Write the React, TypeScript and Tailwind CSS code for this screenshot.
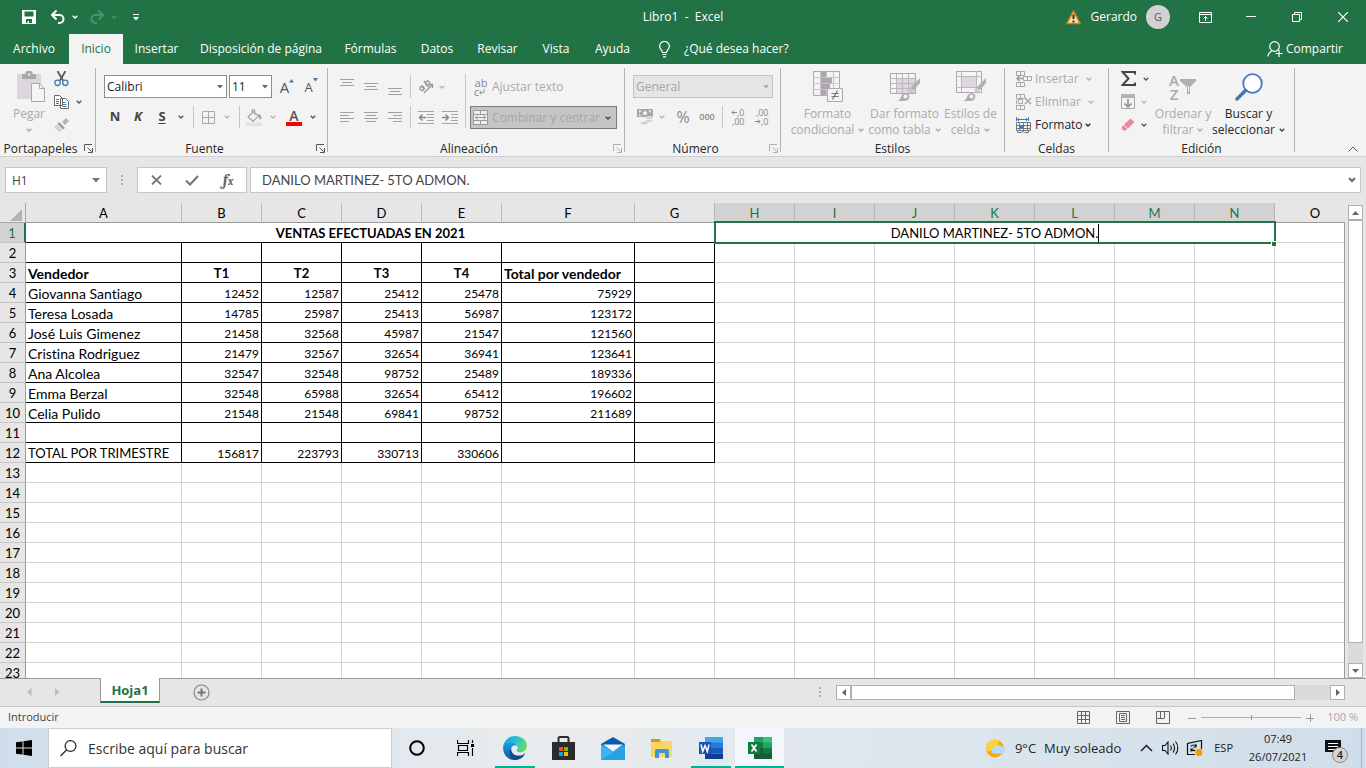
import type { ReactNode } from "react";

const cols = ["A", "B", "C", "D", "E", "F", "G", "H", "I", "J", "K", "L", "M", "N", "O"];
const selectedCols = "HIJKLMN";

const colWidths = [
  "w-[26px]", "w-[156px]", "w-[80px]", "w-[80px]", "w-[80px]", "w-[80px]", "w-[133px]", "w-[80px]",
  "w-[80px]", "w-[80px]", "w-[80px]", "w-[80px]", "w-[80px]", "w-[80px]", "w-[80px]", "w-auto",
];

const sheet: Record<number, (string | number)[]> = {
  3: ["Vendedor", "T1", "T2", "T3", "T4", "Total por vendedor"],
  4: ["Giovanna Santiago", 12452, 12587, 25412, 25478, 75929],
  5: ["Teresa Losada", 14785, 25987, 25413, 56987, 123172],
  6: ["José Luis Gimenez", 21458, 32568, 45987, 21547, 121560],
  7: ["Cristina Rodriguez", 21479, 32567, 32654, 36941, 123641],
  8: ["Ana Alcolea", 32547, 32548, 98752, 25489, 189336],
  9: ["Emma Berzal", 32548, 65988, 32654, 65412, 196602],
  10: ["Celia Pulido", 21548, 21548, 69841, 98752, 211689],
  12: ["TOTAL POR TRIMESTRE", 156817, 223793, 330713, 330606],
};

const tabs = [
  { name: "Archivo", width: "w-[68px]" },
  { name: "Inicio", width: "w-[54px]", active: true },
  { name: "Insertar", width: "w-[67px]" },
  { name: "Disposición de página", width: "w-[142px]" },
  { name: "Fórmulas", width: "w-[77px]" },
  { name: "Datos", width: "w-[56px]" },
  { name: "Revisar", width: "w-[65px]" },
  { name: "Vista", width: "w-[52px]" },
  { name: "Ayuda", width: "w-[61px]" },
];

const entry = "DANILO MARTINEZ- 5TO ADMON.";

function Icon({ w, h, children, className = "" }: { w: number; h: number; children: ReactNode; className?: string }) {
  return (
    <svg width={w} height={h} viewBox={`0 0 ${w} ${h}`} fill="none" aria-hidden="true" className={`shrink-0 ${className}`}>
      {children}
    </svg>
  );
}

function Chevron({ className = "text-[#555]" }: { className?: string }) {
  return (
    <Icon w={6} h={4} className={className}>
      <path d="M.7.7 3 3 5.3.7" stroke="currentColor" strokeWidth="1.3" />
    </Icon>
  );
}

function Caret({ className = "text-[#666]" }: { className?: string }) {
  return (
    <Icon w={6} h={4} className={className}>
      <path d="M0 0h6L3 3.5z" fill="currentColor" />
    </Icon>
  );
}

function Btn({ label, className = "", children, disabled }: { label: string; className?: string; children: ReactNode; disabled?: boolean }) {
  return (
    <button type="button" aria-label={label} disabled={disabled} className={`flex shrink-0 items-center justify-center ${className}`}>
      {children}
    </button>
  );
}

function Group({ label, width, launcher, children }: { label: string; width: string; launcher?: "on" | "off"; children: ReactNode }) {
  return (
    <>
      <section aria-label={label} className={`flex shrink-0 flex-col pt-[3px] ${width}`}>
        <div className="flex flex-1">{children}</div>
        <div className="flex h-4 items-center">
          <span className="flex-1 pt-[2px] text-center leading-4">{label}</span>
          {launcher && (
            <Btn label={`Opciones de ${label}`} disabled={launcher === "off"} className={`w-[14px] ${launcher === "on" ? "text-[#555]" : "text-[#b0b0b0]"}`}>
              <Icon w={9} h={9}>
                <path d="M.5 7V.5H8M3.500 3.500l4 4M8.500 4v4.500H4" stroke="currentColor" />
              </Icon>
            </Btn>
          )}
        </div>
      </section>
      <div className="my-1 w-px shrink-0 bg-[#b3b3b3]" />
    </>
  );
}

function Big({ icon, top, bottom, width, disabled = true }: { icon: ReactNode; top: string; bottom?: string; width: string; disabled?: boolean }) {
  return (
    <button type="button" disabled={disabled} className={`flex shrink-0 flex-col items-center whitespace-nowrap leading-4 ${width} ${disabled ? "text-[#aaa]" : "text-[#262626]"}`}>
      <span className="flex h-[39px] items-center justify-center">{icon}</span>
      <span>{top}</span>
      <span className="flex h-4 items-center gap-1">
        {bottom}
        <Chevron className={disabled ? "text-[#aaa]" : "text-[#444]"} />
      </span>
    </button>
  );
}

function Sep({ className = "" }: { className?: string }) {
  return <div className={`w-px shrink-0 self-stretch bg-[#c6c6c6] ${className}`} />;
}

function Lines({ rows }: { rows: [number, number, number][] }) {
  return (
    <Icon w={14} h={22}>
      {rows.map(([x, y, w]) => (
        <path key={y} d={`M${x} ${y}.5h${w}`} stroke="#a0a0a0" />
      ))}
    </Icon>
  );
}

function BrushTip() {
  return (
    <>
      <path d="m30 7-9.500 9.500 3 3L30 12z" fill="#b0aeb0" />
      <path d="m20 17 3.500 3.500-2 2-3.500-3.500z" fill="#c8c5c8" />
      <path d="M7 30c4-1 3-3 5-6 2-2.500 5.500-2.500 7 0 1.300 3-1 6-5 6z" fill="#aeacae" />
      <circle cx="15.500" cy="25.500" r="2" fill="#f3f3f3" />
    </>
  );
}

function TitleBar() {
  return (
    <header className="flex h-[34px] shrink-0 items-center">
      <div className="flex flex-1 items-center">
        <Btn label="Guardar" className="ml-[22px] w-[14px]">
          <Icon w={14} h={14}>
            <path d="M0 0h14v14H0zM2.500 1.500v5h9v-5zM4 9v4h1.500v-2H7v2h3V9z" fill="#fff" fillRule="evenodd" />
          </Icon>
        </Btn>
        <Btn label="Deshacer" className="ml-[15px] w-[14px]">
          <Icon w={14} h={14}>
            <path d="M1 5h7.500a4 4 0 0 1 0 8H7" stroke="#fff" strokeWidth="2" />
            <path d="M5.500.5 1 5l4.500 4.500" stroke="#fff" strokeWidth="2" />
          </Icon>
        </Btn>
        <Btn label="Más deshacer" className="ml-[7px] w-[6px]"><Chevron className="text-white" /></Btn>
        <Btn label="Rehacer" disabled className="ml-3 w-[14px]">
          <Icon w={14} h={14}>
            <path d="M13 5H5.500a4 4 0 0 0 0 8H7M8.500.5 13 5 8.500 9.500" stroke="#4f9170" strokeWidth="2" />
          </Icon>
        </Btn>
        <Btn label="Más rehacer" disabled className="ml-[7px] w-[6px]"><Chevron className="text-[#4f9170]" /></Btn>
        <Btn label="Personalizar barra" className="ml-4 w-[6px]">
          <Icon w={6} h={7}>
            <path d="M0 .5h6" stroke="#fff" />
            <path d="M0 3h6L3 6.500z" fill="#fff" />
          </Icon>
        </Btn>
      </div>
      <h1 className="whitespace-pre text-xs">Libro1  -  Excel</h1>
      <div className="flex flex-1 items-center justify-end">
        <Icon w={15} h={15} className="mr-[10px]">
          <path d="M7.500 1 14 13.500H1z" fill="#fbe3a4" stroke="#e2791b" strokeWidth="1.500" />
          <path d="M7.500 4.500v4.500M7.500 10.500v2" stroke="#3d2a10" strokeWidth="2" />
        </Icon>
        <span>Gerardo</span>
        <button type="button" aria-label="Cuenta" className="ml-[9px] mr-3 size-6 rounded-full bg-[#d2d2d2] text-[11px] text-[#555]">G</button>
        <Btn label="Opciones de la cinta" className="w-[46px]">
          <Icon w={13} h={11}>
            <path d="M.5.5h12v10H.5zM.5 2.500h12M6.500 9V4.500M4.500 6.500l2-2 2 2" stroke="#fff" />
          </Icon>
        </Btn>
        <Btn label="Minimizar" className="w-[46px]"><Icon w={10} h={2}><path d="M0 .5h10" stroke="#fff" /></Icon></Btn>
        <Btn label="Restaurar" className="w-[46px]">
          <Icon w={10} h={10}><path d="M.5 2.500h7v7h-7zM2.500 2V.5h7v7H8" stroke="#fff" /></Icon>
        </Btn>
        <Btn label="Cerrar" className="w-[46px]"><Icon w={10} h={10}><path d="m0 0 10 10M10 0 0 10" stroke="#fff" strokeWidth="1.200" /></Icon></Btn>
      </div>
    </header>
  );
}

function TabBar() {
  return (
    <nav className="flex h-[30px] shrink-0 items-stretch whitespace-nowrap">
      {tabs.map((t) => (
        <button key={t.name} type="button" className={`flex items-center justify-center first:mr-px ${t.width} ${t.active ? "bg-[#f3f3f3] text-[#217346]" : ""}`}>
          {t.name}
        </button>
      ))}
      <button type="button" className="ml-4 flex items-center gap-[14px]">
        <Icon w={11} h={17}>
          <path d="M3.500 11.500C3.500 9 .6 8.500.6 5.300a4.900 4.900 0 0 1 9.800 0c0 3.200-2.900 3.700-2.900 6.200zM3.500 13.500h4M4 15.800h3" stroke="#fff" strokeWidth="1.200" />
        </Icon>
        ¿Qué desea hacer?
      </button>
      <button type="button" className="ml-auto mr-[23px] flex items-center gap-[3px]">
        <Icon w={16} h={16}>
          <circle cx="7.500" cy="5.500" r="4.800" stroke="#fff" strokeWidth="1.200" />
          <path d="M1 15.500c0-3 2-4.500 4-5.500M12 9v7M8.500 12.500h7" stroke="#fff" strokeWidth="1.200" />
        </Icon>
        Compartir
      </button>
    </nav>
  );
}

function Clipboard() {
  return (
    <Group label="Portapapeles" width="w-[95px]" launcher="on">
      <Big
        width="ml-3 w-[34px]"
        top="Pegar"
        icon={
          <Icon w={28} h={31} className="ml-1">
            <path d="M0 3h24v25H0z" fill="#dcd6dc" />
            <path d="M5 3h3.500V1.500A1.500 1.500 0 0 1 10 0h4a1.500 1.500 0 0 1 1.500 1.500V3H19v5H5z" fill="#aba8ab" />
            <path d="M11 2.500h2v2h-2z" fill="#f3f3f3" />
            <path d="M14.500 12.500h8l5 5v13h-13z" fill="#f6f3f7" stroke="#aaa6aa" />
            <path d="M22.500 12.500v5h5" stroke="#aaa6aa" />
          </Icon>
        }
      />
      <div className="ml-[6px] flex flex-col">
        <Btn label="Cortar" className="h-[23px] w-[18px]">
          <Icon w={15} h={16}>
            <path d="m3.500 0 5.500 9.500M11.500 0 6 9.500" stroke="#5a5a5a" strokeWidth="1.800" />
            <circle cx="3.500" cy="11.800" r="2.700" stroke="#4379b5" strokeWidth="1.300" />
            <circle cx="11.300" cy="11.800" r="2.700" stroke="#4379b5" strokeWidth="1.300" />
          </Icon>
        </Btn>
        <div className="flex">
          <Btn label="Copiar" className="h-[23px] w-[18px]">
            <Icon w={15} h={14}>
              <path d="M.5.5h5l3 3v7h-8zM6.500 3.500h5l3 3v7h-8z" fill="#fff" stroke="#666" />
              <path d="M2 4.500h3M2 6.500h3M2 8.500h3M8.500 7.500h3M8.500 9.500h4M8.500 11.500h4" stroke="#4379b5" />
            </Icon>
          </Btn>
          <Btn label="Opciones de copiar" className="w-[18px]"><Chevron /></Btn>
        </div>
        <Btn label="Copiar formato" disabled className="h-[23px] w-[18px]">
          <Icon w={15} h={14}>
            <path d="m15 3-3-3-4 4 3 3z" fill="#b5b3b5" />
            <path d="m5 4 6 6-2 1.500-5.500-5.500z" fill="#9c9a9c" />
            <path d="M3 6.500 8 12l-3 2-5-5z" fill="#d5d0d5" />
          </Icon>
        </Btn>
      </div>
    </Group>
  );
}

function Font() {
  return (
    <Group label="Fuente" width="w-[231px]" launcher="on">
      <div className="flex flex-col pl-2 pt-2">
        <div className="flex h-[23px]">
          <div className="relative mr-[2px] w-[123px]">
            <select aria-label="Fuente" className="h-full w-full appearance-none border border-[#8e8e8e] bg-white px-[2px] text-[#222]"><option>Calibri</option></select>
            <Caret className="absolute right-1 top-[10px] text-[#666]" />
          </div>
          <div className="relative w-[43px]">
            <select aria-label="Tamaño" className="h-full w-full appearance-none border border-[#8e8e8e] bg-white px-[2px] text-[#222]"><option>11</option></select>
            <Caret className="absolute right-1 top-[10px] text-[#666]" />
          </div>
          <Btn label="Aumentar" className="ml-[3px] w-6 text-[15px] text-[#555]">
            A<Icon w={5} h={4} className="mb-3"><path d="M0 3.500 2.500 0 5 3.500z" fill="#4379b5" /></Icon>
          </Btn>
          <Btn label="Disminuir" className="w-6 pt-[3px] text-[13px] text-[#555]">
            A<Icon w={5} h={4} className="mb-4"><path d="M0 0h5L2.500 3.500z" fill="#4379b5" /></Icon>
          </Btn>
        </div>
        <div className="mt-2 flex h-[22px] items-center">
          <Btn label="Negrita" className="w-[22px] text-[13px] font-bold text-[#444]">N</Btn>
          <Btn label="Cursiva" className="w-6 text-[13px] font-bold italic text-[#444]">K</Btn>
          <Btn label="Subrayado" className="w-6 text-[13px] font-bold text-[#444] underline underline-offset-2">S</Btn>
          <Btn label="Más subrayados" className="w-[14px]"><Chevron /></Btn>
          <Sep className="ml-[5px]" />
          <Btn label="Bordes" disabled className="w-7">
            <Icon w={13} h={13}><path d="M.5.5h12v12H.5zM6.500 0v13M0 6.500h13" stroke="#aaa" /></Icon>
          </Btn>
          <Btn label="Más bordes" disabled className="w-[10px]"><Chevron className="text-[#b5b5b5]" /></Btn>
          <Sep className="ml-[7px]" />
          <Btn label="Relleno" disabled className="w-7">
            <Icon w={16} h={17}>
              <path d="M7.500 2.500 2 8l5 4.500L12.500 7zM6 5V1.500a1.300 1.300 0 0 1 2.600 0V6" stroke="#a5a3a5" strokeWidth="1.200" />
              <path d="M12 5c3.500.5 3.500 3 3 6-1-1-2-2-3-4z" fill="#a5a3a5" />
              <path d="M0 13.500h16V17H0z" fill="#e4dfe4" />
            </Icon>
          </Btn>
          <Btn label="Más rellenos" disabled className="w-[10px]"><Chevron className="text-[#b5b5b5]" /></Btn>
          <Btn label="Color de fuente" className="w-8 flex-col text-[14px] leading-[13px] text-[#555]">
            <span className="h-[13px] font-semibold">A</span>
            <span className="h-1 w-4 bg-[#f00]" />
          </Btn>
          <Btn label="Más colores" className="w-[6px]"><Chevron /></Btn>
        </div>
      </div>
    </Group>
  );
}

function Alignment() {
  return (
    <Group label="Alineación" width="w-[296px]" launcher="off">
      <div className="flex flex-col gap-2 pl-[7px] pt-2">
        <div className="flex h-[23px] items-center">
          <Btn label="Alinear arriba" disabled className="w-6"><Lines rows={[[0, 3, 14], [2, 6, 10], [0, 9, 14]]} /></Btn>
          <Btn label="Alinear en medio" disabled className="w-6"><Lines rows={[[0, 7, 14], [2, 10, 10], [0, 13, 14]]} /></Btn>
          <Btn label="Alinear abajo" disabled className="w-6"><Lines rows={[[0, 12, 14], [2, 15, 10], [0, 18, 14]]} /></Btn>
          <Sep className="mx-[3px]" />
          <Btn label="Orientación" disabled className="w-6">
            <Icon w={16} h={15}>
              <path d="M6 14 14 6M11 5.500h3.500V9" stroke="#999" strokeWidth="1.300" />
              <circle cx="4" cy="9.500" r="2" stroke="#999" strokeWidth="1.300" />
              <path d="m3.500 6.500 3 4M6 2l4.500 6" stroke="#999" strokeWidth="1.400" />
              <circle cx="9.500" cy="4" r="2" stroke="#999" strokeWidth="1.300" />
            </Icon>
          </Btn>
          <Btn label="Más orientación" disabled className="w-2"><Chevron className="text-[#b5b5b5]" /></Btn>
        </div>
        <div className="flex h-[22px] items-center">
          <Btn label="Izquierda" disabled className="w-6"><Lines rows={[[0, 6, 14], [0, 9, 9], [0, 12, 14], [0, 15, 9]]} /></Btn>
          <Btn label="Centrar" disabled className="w-6"><Lines rows={[[0, 6, 14], [2, 9, 10], [0, 12, 14], [2, 15, 10]]} /></Btn>
          <Btn label="Derecha" disabled className="w-6"><Lines rows={[[0, 6, 14], [5, 9, 9], [0, 12, 14], [5, 15, 9]]} /></Btn>
          <Sep className="mx-[3px]" />
          <Btn label="Disminuir sangría" disabled className="w-6">
            <Icon w={16} h={13}><path d="M0 .5h16M9 3.500h7M9 6.500h7M9 9.500h7M0 12.500h16" stroke="#a5a5a5" /><path d="M8 6.500H2M4.500 3.500l-3 3 3 3" stroke="#8a8a8a" strokeWidth="1.500" /></Icon>
          </Btn>
          <Btn label="Aumentar sangría" disabled className="w-6">
            <Icon w={16} h={13}><path d="M0 .5h16M9 3.500h7M9 6.500h7M9 9.500h7M0 12.500h16" stroke="#a5a5a5" /><path d="M0 6.500h6M3.500 3.500l3 3-3 3" stroke="#8a8a8a" strokeWidth="1.500" /></Icon>
          </Btn>
        </div>
      </div>
      <Sep className="mb-3 ml-[3px] mr-1 mt-[7px]" />
      <div className="flex flex-col gap-2 pt-2">
        <button type="button" disabled className="flex h-[23px] items-center gap-1 px-1 text-[#aaa]">
          <span className="flex w-[14px] flex-col text-[11px] leading-[9px] text-[#888]">
            <span>ab</span>
            <span className="flex items-center">c<Icon w={6} h={7}><path d="M5 1v3.500H1M2.500 2.500l-2 2 2 2" stroke="#999" /></Icon></span>
          </span>
          Ajustar texto
        </button>
        <div className="flex h-[23px] w-[147px] items-center border border-[#7c7c7c] bg-[#c5c5c5] text-[#a5a5a5]">
          <button type="button" disabled className="flex flex-1 items-center gap-1 whitespace-nowrap pl-[2px]">
            <Icon w={15} h={15}>
              <path d="M.5.5h14v14H.5z" fill="#f1edf2" stroke="#9a989a" />
              <path d="M.5 4.500h14M.5 10.500h14M7.500 0v4M7.500 11v4M2.500 7.500h10M4.500 5.500l-2 2 2 2M10.500 5.500l2 2-2 2" stroke="#9a989a" />
            </Icon>
            Combinar y centrar
          </button>
          <Btn label="Más combinar" className="w-4"><Chevron className="text-[#444]" /></Btn>
        </div>
      </div>
    </Group>
  );
}

function NumberGroup() {
  return (
    <Group label="Número" width="w-[155px]" launcher="off">
      <div className="flex flex-col pl-2 pt-2">
        <div className="relative h-[23px] w-[140px]">
          <select aria-label="Formato de número" disabled className="h-full w-full appearance-none border border-[#c3c3c3] bg-[#e5e5e5] px-[2px] text-[#a5a5a5] opacity-100"><option>General</option></select>
          <Caret className="absolute right-1 top-[10px] text-[#aaa]" />
        </div>
        <div className="mt-2 flex h-[22px] items-center text-[#888]">
          <Btn label="Moneda" disabled className="w-6">
            <Icon w={16} h={16}>
              <path d="M0 0h16v8H0z" fill="#a8a6a8" />
              <path d="M2 1.500h3L2 4zM11 1.500h3V4zM2 5v2h3z" fill="#f3f3f3" />
              <circle cx="8" cy="4" r="2" fill="#f3f3f3" />
              <ellipse cx="12" cy="9" rx="3.800" ry="1.600" fill="#d6d0d6" stroke="#f3f3f3" strokeWidth=".6" />
              <ellipse cx="12" cy="12" rx="3.800" ry="1.600" fill="#d6d0d6" stroke="#f3f3f3" strokeWidth=".6" />
              <ellipse cx="7" cy="14" rx="3.500" ry="1.500" fill="#d6d0d6" />
            </Icon>
          </Btn>
          <Btn label="Más moneda" disabled className="w-[10px]"><Chevron className="text-[#b5b5b5]" /></Btn>
          <Btn label="Porcentaje" disabled className="w-8 text-base">%</Btn>
          <Btn label="Miles" disabled className="w-4 text-[9px] font-semibold">000</Btn>
          <Sep className="ml-[7px] mr-[2px]" />
          <Btn label="Aumentar decimales" disabled className="w-6 text-[9px] leading-[9px]">
            <span className="flex w-[15px] flex-col items-end">
              <span className="flex items-center"><Icon w={6} h={5}><path d="M6 2.500H1M3 .5l-2 2 2 2" stroke="#888" /></Icon>,0</span>
              <span>,00</span>
            </span>
          </Btn>
          <Btn label="Disminuir decimales" disabled className="w-6 text-[9px] leading-[9px]">
            <span className="flex w-[15px] flex-col items-end">
              <span>,00</span>
              <span className="flex items-center"><Icon w={6} h={5}><path d="M0 2.500h5M3 .5l2 2-2 2" stroke="#888" /></Icon>,0</span>
            </span>
          </Btn>
        </div>
      </div>
    </Group>
  );
}

function Styles() {
  return (
    <Group label="Estilos" width="w-[223px]">
      <Big
        width="ml-[9px] w-[75px]"
        top="Formato"
        bottom="condicional"
        icon={
          <Icon w={30} h={31}>
            <path d="M.5.5h26v24H.5z" fill="#f6f2f7" stroke="#aaa8aa" />
            <path d="M0 6.500h27M0 12.500h27M0 18.500h27M7.500 0v25M13.500 0v25M20.500 0v25" stroke="#c9c6c9" />
            <path d="M8 0h5v6H8zM8 7h11v5H8zM8 13h9v5H8zM8 19h5v6H8z" fill="#aaa8aa" />
            <path d="M14.500 17.500h15v13h-15z" fill="#f6f2f7" stroke="#aaa8aa" />
            <path d="M18.500 22.500h7M18.500 25.500h7M24.500 19.500l-5 9" stroke="#777" strokeWidth="1.200" />
          </Icon>
        }
      />
      <Big
        width="w-[79px]"
        top="Dar formato"
        bottom="como tabla"
        icon={
          <Icon w={30} h={31}>
            <path d="M.5 2.500h25v20H.5z" fill="#f6f2f7" stroke="#aaa8aa" />
            <path d="M7 8h18v14H7z" fill="#dcd7dc" />
            <path d="M0 7.500h25M0 12.500h25M0 17.500h25M6.500 3v19M12.500 3v19M18.500 3v19" stroke="#bbb8bb" />
            <BrushTip />
          </Icon>
        }
      />
      <Big
        width="w-[53px]"
        top="Estilos de"
        bottom="celda"
        icon={
          <Icon w={30} h={31}>
            <path d="M.5.5h25v21H.5z" fill="#f6f2f7" stroke="#aaa8aa" />
            <path d="M6 6h14v11H6z" fill="#dcd7dc" />
            <path d="M0 5.500h26M0 16.500h26M5.500 0v22M20.500 0v22" stroke="#bbb8bb" />
            <BrushTip />
          </Icon>
        }
      />
    </Group>
  );
}

function Cells() {
  return (
    <Group label="Celdas" width="w-[103px]">
      <div className="flex flex-col pl-[11px]">
        <button type="button" disabled className="flex h-[23px] items-center text-[#aaa]">
          <Icon w={16} h={16} className="mr-[3px]">
            <path d="M.5.5h8v4h-8zM4.500.5v4M.5 11.500h8v4h-8zM4.500 11.500v4M7.500 5.500h8v4h-8zM11.500 5.500v4" stroke="#aaa6aa" />
            <path d="M7 7.500H1M3.500 5l-2.500 2.500L3.500 10" stroke="#999" strokeWidth="1.300" />
          </Icon>
          Insertar
          <Chevron className="ml-[7px] text-[#b5b5b5]" />
        </button>
        <button type="button" disabled className="flex h-[23px] items-center text-[#aaa]">
          <Icon w={16} h={16} className="mr-[3px]">
            <path d="M.5.5h8v4h-8zM4.500.5v4M.5 11.500h8v4h-8zM4.500 11.500v4M.5 5.500v5M2.500 5.500h4v4h-4z" stroke="#aaa6aa" />
            <path d="m9 4 6 6M15 4l-6 6" stroke="#aaa6aa" strokeWidth="1.500" />
          </Icon>
          Eliminar
          <Chevron className="ml-[7px] text-[#b5b5b5]" />
        </button>
        <button type="button" className="flex h-[23px] items-center text-[#262626]">
          <Icon w={15} h={16} className="mr-1">
            <path d="M.5 0v4M12.500 0v4M1 2.500h11M3 1 1.500 2.500 3 4M10 1l1.500 1.500L10 4" stroke="#4379b5" />
            <path d="M.5 5.500h14v8H.5zM.5 8.500h14M.5 11.500h14M3.500 5v9M7.500 5v9M11.500 5v9M1.500 14v1.500h4l1.500-1 1.500 1h4V14" stroke="#777" />
            <path d="M4 8h4v4H4z" fill="#4379b5" />
          </Icon>
          Formato
          <Chevron className="ml-[2px]" />
        </button>
      </div>
    </Group>
  );
}

function Editing() {
  return (
    <Group label="Edición" width="w-[185px]">
      <div className="flex flex-col pl-[7px]">
        <div className="flex h-[23px]">
          <Btn label="Autosuma" className="w-6"><Icon w={15} h={15}><path d="M14 3.500V1H1.500l6 6.500-6 6.500H14v-2.500" stroke="#444" strokeWidth="2" /></Icon></Btn>
          <Btn label="Más autosuma" className="w-3"><Chevron /></Btn>
        </div>
        <div className="flex h-[23px]">
          <Btn label="Rellenar" disabled className="w-6">
            <Icon w={14} h={15}><path d="M.5.5h13v14H.5z" fill="#f6f2f7" stroke="#aaa8aa" /><path d="M0 0h14v4H0z" fill="#b5b2b5" /><path d="M7 5v8M3.500 9.500 7 13l3.500-3.500" stroke="#999" strokeWidth="1.800" /></Icon>
          </Btn>
          <Btn label="Más rellenar" disabled className="w-2"><Chevron className="text-[#b5b5b5]" /></Btn>
        </div>
        <div className="flex h-[23px]">
          <Btn label="Borrar" className="w-6">
            <Icon w={14} h={13}><path d="m9.500.5 4 3.500-6.500 6.500-4-3.800z" fill="#e8869c" /><path d="m2.300 7.300 4 3.800-1.800 1.400H2.500L.8 11V9z" fill="#e8869c" /></Icon>
          </Btn>
          <Btn label="Más borrar" className="w-2"><Chevron /></Btn>
        </div>
      </div>
      <Big
        width="w-[62px]"
        top="Ordenar y"
        bottom="filtrar"
        icon={
          <span className="flex items-center text-[#aaa]">
            <span className="flex flex-col text-[15px] font-semibold leading-[14px]"><span>A</span><span>Z</span></span>
            <Icon w={18} h={17}><path d="M1 1h16v2l-6 6v7H8V9L1 3z" fill="#b0aeb0" /><path d="M9.500 8v6" stroke="#f3f3f3" /></Icon>
          </span>
        }
      />
      <Big
        width="w-[69px]"
        top="Buscar y"
        bottom="seleccionar"
        disabled={false}
        icon={
          <Icon w={28} h={28}>
            <circle cx="17.500" cy="10.500" r="9.300" fill="#fff" stroke="#4379b5" strokeWidth="1.800" />
            <path d="M10.500 17.500 2 26" stroke="#4379b5" strokeWidth="3.500" strokeLinecap="round" />
          </Icon>
        }
      />
    </Group>
  );
}

function FormulaBar() {
  return (
    <div className="flex h-[46px] shrink-0 items-start pl-[5px] pr-[5px] pt-[10px] text-[#444]">
      <div className="flex h-[26px] w-[102px] items-center border border-[#c6c6c6] bg-white">
        <input aria-label="Cuadro de nombres" defaultValue="H1" className="w-0 flex-1 pl-[6px] pt-px outline-none" />
        <Btn label="Nombres" className="w-5"><Icon w={8} h={5}><path d="M0 0h8L4 4.500z" fill="#777" /></Icon></Btn>
      </div>
      <Icon w={30} h={26}><path d="M14 8h2v2h-2zM14 12h2v2h-2zM14 16h2v2h-2z" fill="#b0b0b0" /></Icon>
      <div className="mr-[3px] flex h-[26px] w-[110px] border border-[#c6c6c6] bg-white">
        <Btn label="Cancelar" className="w-9"><Icon w={11} h={10}><path d="m1 .5 9 9M10 .5l-9 9" stroke="#777" strokeWidth="1.800" /></Icon></Btn>
        <Btn label="Introducir" className="w-9"><Icon w={14} h={11}><path d="m1 5.500 4 4L13 1" stroke="#777" strokeWidth="2.200" /></Icon></Btn>
        <Btn label="Insertar función" className="w-9 font-serif text-base font-bold italic text-[#666]">
          <span>f</span><span className="pt-1 text-[11px]">x</span>
        </Btn>
      </div>
      <div className="flex h-[26px] flex-1 items-center border border-[#c6c6c6] bg-white">
        <input aria-label="Barra de fórmulas" defaultValue={entry} className="flex-1 pl-[11px] pt-[2px] font-[Lato,sans-serif] text-[13px] outline-none" />
        <Btn label="Expandir" className="w-4"><Icon w={8} h={6}><path d="M1 1l3 3 3-3" stroke="#666" strokeWidth="2" /></Icon></Btn>
      </div>
    </div>
  );
}

function cellClass(row: number, col: number, value?: string | number) {
  const inTable = row <= 12 && col < 7;
  const align = typeof value === "number" ? "text-right" : row === 3 && col > 0 && col < 5 ? "text-center" : "text-left";
  const size = typeof value === "number" ? "text-[12px]" : /[a-z]/.test(value ?? "") ? "text-[14px]" : "text-[13px]";
  return `h-5 overflow-hidden border-b border-r px-[2px] pb-0 pt-[2px] whitespace-nowrap leading-[17px] ${inTable ? "border-black" : "border-[#d4d4d4]"} ${align} ${size} ${row === 3 ? "font-bold" : ""}`;
}

function Grid() {
  return (
    <div className="flex min-h-0 flex-1 gap-[3px] pr-[3px]">
      <div className="relative min-w-0 flex-1 overflow-hidden">
        <table className="w-full table-fixed border-separate border-spacing-0 bg-white font-[Lato,sans-serif] text-[13px] leading-[17px] text-black [font-variant-ligatures:none]">
          <colgroup>
            {colWidths.map((w, i) => <col key={i} className={w} />)}
          </colgroup>
          <thead>
            <tr className="bg-[#e6e6e6]">
              <th className="h-5 border-b border-r border-[#a6a6a6] p-0" aria-label="Seleccionar todo">
                <Icon w={12} h={12} className="ml-auto mr-[3px] mt-1"><path d="M12 0v12H0z" fill="#b3b3b3" /></Icon>
              </th>
              {cols.map((c) => {
                const on = selectedCols.includes(c);
                return (
                  <th key={c} scope="col" className={`h-5 border-b border-b-[#9b9b9b] p-0 pt-[2px] font-normal ${c === "O" ? "pl-[10px]" : "border-r border-r-[#b8b8b8]"} ${on ? "bg-[#d2d2d2] text-[#217346]" : ""}`}>
                    {c}
                  </th>
                );
              })}
            </tr>
          </thead>
          <tbody>
            {Array.from({ length: 23 }, (_, i) => i + 1).map((row) => (
              <tr key={row}>
                <th scope="row" className={`h-5 border-b border-r border-b-[#c6c6c6] p-0 pt-[2px] font-normal ${row === 1 ? "border-r-2 border-r-[#217346] bg-[#d2d2d2] text-[#217346]" : "border-r-[#9b9b9b] bg-[#e6e6e6]"}`}>
                  {row}
                </th>
                {row === 1 ? (
                  <>
                    <td colSpan={7} className="h-5 border-b border-black p-0 pt-[2px] text-center font-bold">VENTAS EFECTUADAS EN 2021</td>
                    <td colSpan={7} className="relative h-5 p-0">
                      <div className="absolute -bottom-px -left-px -right-px -top-0.5 flex items-center justify-center border-2 border-[#217346] bg-white">
                        <input aria-label="H1" defaultValue={entry} className="field-sizing-content h-[18px] border-r border-black pt-px outline-none" />
                        <span className="absolute -bottom-1 -right-0.5 size-[5px] border-l border-t border-white bg-[#217346]" />
                      </div>
                    </td>
                    <td className={cellClass(1, 14)} />
                  </>
                ) : (
                  cols.map((c, i) => {
                    const value = sheet[row]?.[i];
                    return <td key={c} className={cellClass(row, i, value)}>{value}</td>;
                  })
                )}
              </tr>
            ))}
          </tbody>
        </table>
        <div className="pointer-events-none absolute bottom-0 right-0 top-[19px] w-px bg-[#9b9b9b]" />
      </div>
      <div className="flex w-[15px] shrink-0 flex-col bg-[#dadada]">
        <div className="h-[2px] bg-[#e6e6e6]" />
        <Btn label="Subir" className="h-[15px] border border-[#b0b0b0] bg-white"><Icon w={7} h={4}><path d="M0 4 3.500 0 7 4z" fill="#666" /></Icon></Btn>
        <div className="h-[423px] border border-[#b0b0b0] bg-white" />
        <Btn label="Bajar" className="mt-auto h-[15px] border border-[#b0b0b0] bg-white"><Icon w={7} h={4}><path d="M0 0h7L3.500 4z" fill="#666" /></Icon></Btn>
      </div>
    </div>
  );
}

function SheetTabs() {
  return (
    <div className="flex h-[29px] shrink-0 items-start border-b border-[#c6c6c6] border-t border-t-[#9b9b9b]">
      <Btn label="Hoja anterior" disabled className="ml-[15px] h-[26px] w-7"><Icon w={5} h={8}><path d="M4.500 0v8L0 4z" fill="#bbb" /></Icon></Btn>
      <Btn label="Hoja siguiente" disabled className="h-[26px] w-7"><Icon w={5} h={8}><path d="M0 0v8l4.500-4z" fill="#bbb" /></Icon></Btn>
      <button type="button" className="-mt-px ml-[29px] h-[25px] w-[60px] border-b-2 border-l border-r border-[#9b9b9b] border-b-[#217346] bg-white pt-[2px] text-[13px] font-bold text-[#217346]">Hoja1</button>
      <Btn label="Nueva hoja" className="ml-8 h-[26px] w-[18px]">
        <Icon w={17} h={17}><circle cx="8.500" cy="8.500" r="7.500" stroke="#888" strokeWidth="1.200" /><path d="M8.500 4.500v8M4.500 8.500h8" stroke="#777" strokeWidth="2" /></Icon>
      </Btn>
      <div className="ml-auto mr-[21px] mt-[6px] flex w-[527px] shrink">
        <Icon w={18} h={15}><path d="M1 2h2v2H1zM1 6h2v2H1zM1 10h2v2H1z" fill="#b0b0b0" /></Icon>
        <Btn label="Izquierda" className="h-[15px] w-[15px] border border-[#b0b0b0] bg-white"><Icon w={4} h={7}><path d="M4 0v7L0 3.500z" fill="#666" /></Icon></Btn>
        <div className="h-[15px] flex-1 border border-[#b0b0b0] bg-white" />
        <div className="h-[15px] w-[35px] bg-[#dadada]" />
        <Btn label="Derecha" className="h-[15px] w-[15px] border border-[#b0b0b0] bg-white"><Icon w={4} h={7}><path d="M0 0v7l4-3.500z" fill="#666" /></Icon></Btn>
      </div>
    </div>
  );
}

function StatusBar() {
  return (
    <div className="flex h-[21px] shrink-0 items-center bg-[#f3f3f3] pl-2 pr-2 text-[#444]">
      <span className="text-[11px]">Introducir</span>
      <div className="ml-auto flex items-center">
        <Btn label="Normal" className="w-10"><Icon w={13} h={13}><path d="M.5.5h12v12H.5zM.5 4.500h12M.5 8.500h12M4.500.5v12M8.500.5v12" stroke="#666" /></Icon></Btn>
        <Btn label="Diseño de página" className="w-10"><Icon w={14} h={13}><path d="M.5.5h13v12H.5zM3.500 2.500h7v8h-7zM5 4.500h4M5 6.500h4M5 8.500h4" stroke="#666" /></Icon></Btn>
        <Btn label="Salto de página" className="w-10"><Icon w={14} h={13}><path d="M.5.500h13v12H.5zM4.500 0v7M8.500 0v7M.5 7.500h8" stroke="#666" /></Icon></Btn>
        <Btn label="Alejar" className="w-[18px]"><Icon w={8} h={8}><path d="M0 4.500h8" stroke="#999" /></Icon></Btn>
        <input
          type="range"
          aria-label="Zoom"
          defaultValue={50}
          className="h-px w-[100px] appearance-none bg-[#b0b0b0] [&::-webkit-slider-thumb]:h-[5px] [&::-webkit-slider-thumb]:w-px [&::-webkit-slider-thumb]:appearance-none [&::-webkit-slider-thumb]:bg-[#999]"
        />
        <Btn label="Acercar" className="mr-2 w-[18px]"><Icon w={8} h={8}><path d="M0 4.500h8M4.500 0v8" stroke="#999" /></Icon></Btn>
        <span className="text-[11px] text-[#aaa]">100 %</span>
      </div>
    </div>
  );
}

function TaskButton({ label, state = "", children }: { label: string; state?: "open" | "active" | ""; children: ReactNode }) {
  return (
    <button type="button" aria-label={label} className={`flex w-[49px] flex-col items-center ${state === "active" ? "bg-[#f3f7fb]" : ""}`}>
      <span className="flex flex-1 items-center">{children}</span>
      {state && <span className={`-mt-[2px] h-[2px] bg-[#00b294] ${state === "active" ? "w-full" : "w-10"}`} />}
    </button>
  );
}

function Taskbar() {
  return (
    <footer className="flex h-10 shrink-0 bg-linear-to-r from-[#cfdeea] via-[#e9ecee] via-40% to-[#cfdeea] text-[#222]">
      <Btn label="Inicio" className="w-12">
        <Icon w={16} h={16}><path d="M0 2.300 6.500 1.400v6.100H0zM7.500 1.200 16 0v7.500H7.500zM0 8.500h6.500v6.100L0 13.700zM7.500 8.500H16V16l-8.500-1.200z" fill="#000" /></Icon>
      </Btn>
      <label className="flex w-[344px] items-center border border-[#ccc] bg-white pl-[11px]">
        <Icon w={17} h={17}><circle cx="10.500" cy="6" r="5.400" stroke="#222" strokeWidth="1.200" /><path d="M6.500 10 .5 16" stroke="#222" strokeWidth="1.200" /></Icon>
        <input aria-label="Buscar" placeholder="Escribe aquí para buscar" className="ml-[11px] flex-1 pt-[2px] text-sm outline-none placeholder:text-[#333]" />
      </label>
      <TaskButton label="Cortana"><Icon w={16} h={16}><circle cx="8" cy="8" r="6.800" stroke="#000" strokeWidth="2" /></Icon></TaskButton>
      <TaskButton label="Vista de tareas">
        <Icon w={17} h={16}><path d="M.5 0v3.500h11V0M.5 16v-3.500h11V16M1.500 5.500h9v5h-9zM15.500 0v3M15.500 8v8" stroke="#000" strokeWidth="1.200" /><path d="M14 4h3v3h-3z" fill="#000" /></Icon>
      </TaskButton>
      <TaskButton label="Edge" state="open">
        <svg width="26" height="26" viewBox="0 0 24 24" aria-hidden="true">
          <defs>
            <linearGradient id="edgeTop" x1="0" x2="1" y1=".3" y2=".6"><stop stopColor="#1b9de2" /><stop offset=".5" stopColor="#2bc3d2" /><stop offset="1" stopColor="#6be05a" /></linearGradient>
            <linearGradient id="edgeLow" x1="0" x2="0" y1="0" y2="1"><stop stopColor="#1b9de2" /><stop offset="1" stopColor="#0c59a4" /></linearGradient>
          </defs>
          <path d="M1 12C1 6 6 1 12 1s11 4 11 9c0 4-3 6-6 6-2 0-3.500-.8-3.500-1.800 0-.8 1-1.200 1-3C14.500 9 12 7.500 8.500 7.500 4.500 7.500 1.500 9 1 12z" fill="url(#edgeTop)" />
          <path d="M1 12c.3-2.500 3-4.800 7-4.800 3.500 0 5.500 1.500 6 3-.8-.6-1.600-.8-2.500-.7C9 10 8 12 8 14c0 4 3.500 6.500 7 7-1 .8-2 2-4 2C5.500 23 1 18 1 12z" fill="url(#edgeLow)" />
          <path d="M9 11c-1.500 3 .5 8 6 8 3 0 5-1 6.500-2.500C20 20.500 16 23 12 23c-4.500-1-7-7-3-12z" fill="#114a8b" />
        </svg>
      </TaskButton>
      <TaskButton label="Store">
        <Icon w={23} h={24}>
          <path d="M0 6h23v18H0z" fill="#2b2b2b" />
          <path d="M6.500 7V2.500a1.500 1.500 0 0 1 1.500-1.500h7a1.500 1.500 0 0 1 1.500 1.500V7" stroke="#2b2b2b" strokeWidth="2" />
          <path d="M7 11h4v4H7z" fill="#f25022" /><path d="M12 11h4v4h-4z" fill="#7fba00" />
          <path d="M7 16h4v4H7z" fill="#00a4ef" /><path d="M12 16h4v4h-4z" fill="#ffb900" />
        </Icon>
      </TaskButton>
      <TaskButton label="Correo">
        <Icon w={24} h={23}>
          <path d="M0 7 12 0l12 7v8H0z" fill="#0a5ca8" />
          <path d="M0 7.500 12 14 24 7.500V23H0z" fill="#35b8f1" /><path d="M0 23 24 7.500V23z" fill="#1a8fdc" opacity=".55" /><path d="m2 7.500 10 7 10-7z" fill="#f5f5f5" />
        </Icon>
      </TaskButton>
      <TaskButton label="Explorador">
        <Icon w={21} h={19}>
          <path d="M0 0h9l2 2h10v16H0z" fill="#fcd462" /><path d="M0 0h9v3H0z" fill="#d99a12" />
          <path d="M4 19v-7a2 2 0 0 1 2-2h10a2 2 0 0 1 2 2v7h-4v-5H8v5z" fill="#3f95d8" />
        </Icon>
      </TaskButton>
      <TaskButton label="Word" state="open">
        <Icon w={24} h={22}>
          <path d="M6 0h18v6H6z" fill="#41a5ee" /><path d="M6 5.500h18V11H6z" fill="#2b7cd3" /><path d="M6 11h18v5.500H6z" fill="#185abd" /><path d="M6 16.500h18V22H6z" fill="#103f91" />
          <path d="M0 5h12v12H0z" fill="#1a52b5" /><path d="m2 7.500 1.700 7L6 8.500l2.300 6 1.700-7" stroke="#fff" strokeWidth="1.500" />
        </Icon>
      </TaskButton>
      <TaskButton label="Excel" state="active">
        <Icon w={24} h={22}>
          <path d="M6 0h9v6H6z" fill="#21a366" /><path d="M15 0h9v6h-9z" fill="#33c481" /><path d="M6 5.500h9V11H6z" fill="#107c41" /><path d="M15 5.500h9V11h-9z" fill="#21a366" />
          <path d="M6 11h18v11H6z" fill="#185c37" /><path d="M15 11h9v5.500h-9z" fill="#107c41" />
          <path d="M0 5h12v12H0z" fill="#107c41" /><path d="m3.500 7.500 5 7M8.500 7.500l-5 7" stroke="#fff" strokeWidth="1.700" />
        </Icon>
      </TaskButton>
      <div className="ml-auto flex items-center whitespace-nowrap">
        <button type="button" className="flex items-center pt-px text-[13px]">
          <Icon w={20} h={19} className="mr-[9px]">
            <circle cx="9" cy="9.500" r="9" fill="#f9a81a" /><path d="M9 .5a9 9 0 0 0-8 12C6 13 12 8 13 1.500A9 9 0 0 0 9 .5z" fill="#fdd03f" />
            <path d="M8.500 14.500a3 3 0 0 1 0-6 4 4 0 0 1 7-1 3.600 3.600 0 0 1 1.500 7z" fill="#b5dcf8" />
          </Icon>
          <span className="mr-2">9°C</span>
          <span>Muy soleado</span>
        </button>
        <Btn label="Iconos ocultos" className="ml-[13px] w-6"><Icon w={13} h={8}><path d="m1 7 5.500-5.500L12 7" stroke="#111" strokeWidth="1.400" /></Icon></Btn>
        <Btn label="Volumen" className="w-6">
          <Icon w={17} h={14}><path d="M.5 4.500H3l3-3.500v12l-3-3.500H.5zM8.500 4.500c1 1.500 1 3.500 0 5M11 2.500c2 2.500 2 6.500 0 9M13.500.5c3 3.500 3 9.500 0 13" stroke="#111" strokeWidth="1.100" /></Icon>
        </Btn>
        <Btn label="Actualización" className="w-6">
          <Icon w={17} h={16}><path d="M9 14.500H1.500v-11L15.500.5V9M1 14.500h3" stroke="#111" strokeWidth="1.200" /><path d="M5 6.500c1-2 4-2 5 0M10 4v3H7.500M5 11.500V9h2.500M5 9c1 2 3 2 4 1" stroke="#111" strokeWidth="1.200" /><circle cx="13" cy="12.500" r="3.500" fill="#ff9500" /></Icon>
        </Btn>
        <button type="button" className="ml-2 text-[11px]">ESP</button>
        <button type="button" className="ml-4 w-[58px] text-[11px] leading-[18px]">
          <time className="flex flex-col items-center"><span>07:49</span><span>26/07/2021</span></time>
        </button>
        <button type="button" aria-label="Notificaciones" className="relative ml-[18px] mr-[20px] h-6 w-4">
          <Icon w={16} h={16} className="absolute left-0 top-1"><path d="M0 0h16v12H11v3.500L7.500 12H0z" fill="#111" /><path d="M3 3.500h10M3 6.500h10M3 9.500h7" stroke="#fff" /></Icon>
          <span className="absolute left-[7px] top-[11px] flex size-4 items-center justify-center rounded-full border border-[#888] bg-[#d5d5d5] text-[11px] font-semibold">4</span>
        </button>
        <div className="mr-1 h-10 w-px bg-[#a9b7c3]" />
      </div>
    </footer>
  );
}

export default function App() {
  return (
    <main className="flex h-screen flex-col overflow-hidden bg-[#e6e6e6] font-['Open_Sans',sans-serif] text-xs">
      <div className="bg-[#217346] text-white">
        <TitleBar />
        <TabBar />
      </div>
      <div className="flex h-[93px] shrink-0 border-b border-[#cfcfcf] bg-[#f3f3f3] text-[#262626]">
        <Clipboard />
        <Font />
        <Alignment />
        <NumberGroup />
        <Styles />
        <Cells />
        <Editing />
        <Btn label="Contraer la cinta" className="mb-1 ml-auto mr-2 self-end"><Icon w={10} h={6}><path d="m.5 5.500 4.500-4.500 4.500 4.500" stroke="#555" /></Icon></Btn>
      </div>
      <FormulaBar />
      <Grid />
      <SheetTabs />
      <StatusBar />
      <Taskbar />
    </main>
  );
}
